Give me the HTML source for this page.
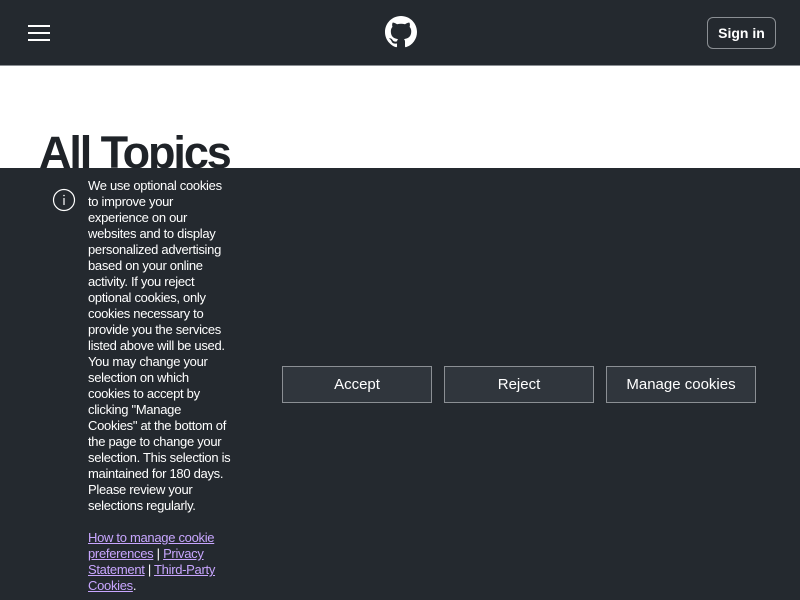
<!DOCTYPE html>
<html><head><meta charset="utf-8"><style>
*{margin:0;padding:0;box-sizing:border-box}
body{width:800px;height:600px;overflow:hidden;background:#fff;font-family:"Liberation Sans",sans-serif;position:relative}
.hdr{position:absolute;left:0;top:0;width:800px;height:66px;background:#24292f;border-bottom:1px solid #8b8f94}
.burger{position:absolute;left:28px;top:25px;width:22px}
.burger i{display:block;height:2px;background:#fff;margin-bottom:5px}
.signin{position:absolute;left:707px;top:17px;width:69px;height:32px;border:1px solid #8b8f94;border-radius:6px;color:#fff;font-size:14px;font-weight:bold;text-align:center;line-height:30px}
h1{position:absolute;left:39px;top:127px;font-size:45px;font-weight:bold;letter-spacing:-2.1px;color:#1f2328}
.ban{position:absolute;left:0;top:168px;width:800px;height:432px;background:#24292f}
.txt{position:absolute;left:88px;top:10px;color:#fff;font-size:13px;line-height:16px;white-space:nowrap;letter-spacing:-0.3px}
.txt a{color:#c8a6ff;text-decoration:underline}
.btn{position:absolute;top:198px;width:150px;height:37px;background:#30363d;border:1px solid #8b8f94;color:#fff;font-size:15px;text-align:center;line-height:36px}
</style></head><body>
<div class="hdr">
<div class="burger"><i></i><i></i><i></i></div>
<svg style="position:absolute;left:385px;top:16px" width="32" height="32" viewBox="0 0 16 16"><path fill="#fff" d="M8 0C3.580 0 0 3.580 0 8c0 3.540 2.290 6.530 5.470 7.590.4.070.55-.17.55-.38 0-.19-.01-.82-.01-1.490-2.010.37-2.530-.49-2.690-.94-.09-.23-.48-.94-.82-1.130-.28-.15-.68-.52-.01-.53.63-.01 1.080.58 1.230.82.72 1.210 1.870.87 2.330.66.07-.52.28-.87.51-1.070-1.780-.2-3.640-.89-3.640-3.950 0-.87.31-1.590.82-2.150-.08-.2-.36-1.020.08-2.120 0 0 .67-.21 2.200.82.64-.18 1.320-.27 2-.27.68 0 1.360.09 2 .27 1.530-1.040 2.200-.82 2.200-.82.44 1.100.16 1.920.08 2.120.51.56.82 1.270.82 2.150 0 3.070-1.870 3.750-3.650 3.950.29.25.54.73.54 1.480 0 1.070-.01 1.930-.01 2.200 0 .21.15.46.55.38A8.013 8.013 0 0016 8c0-4.420-3.580-8-8-8z"/></svg>
<div class="signin">Sign in</div>
</div>
<h1>All Topics</h1>
<div class="ban">
<svg style="position:absolute;left:52px;top:20px" width="24" height="24" viewBox="0 0 24 24"><circle cx="12" cy="12" r="10.5" fill="none" stroke="#fff" stroke-width="1.2"/><rect x="11.4" y="10" width="1.2" height="7" fill="#fff"/><circle cx="12" cy="7.5" r=".8" fill="#fff"/></svg>
<div class="txt">We use optional cookies<br>to improve your<br>experience on our<br>websites and to display<br>personalized advertising<br>based on your online<br>activity. If you reject<br>optional cookies, only<br>cookies necessary to<br>provide you the services<br>listed above will be used.<br>You may change your<br>selection on which<br>cookies to accept by<br>clicking "Manage<br>Cookies" at the bottom of<br>the page to change your<br>selection. This selection is<br>maintained for 180 days.<br>Please review your<br>selections regularly.<br><br><a>How to manage cookie</a><br><a>preferences</a> | <a>Privacy</a><br><a>Statement</a> | <a>Third-Party</a><br><a>Cookies</a>.</div>
<div class="btn" style="left:282px">Accept</div>
<div class="btn" style="left:444px">Reject</div>
<div class="btn" style="left:606px">Manage cookies</div>
</div>
</body></html>
